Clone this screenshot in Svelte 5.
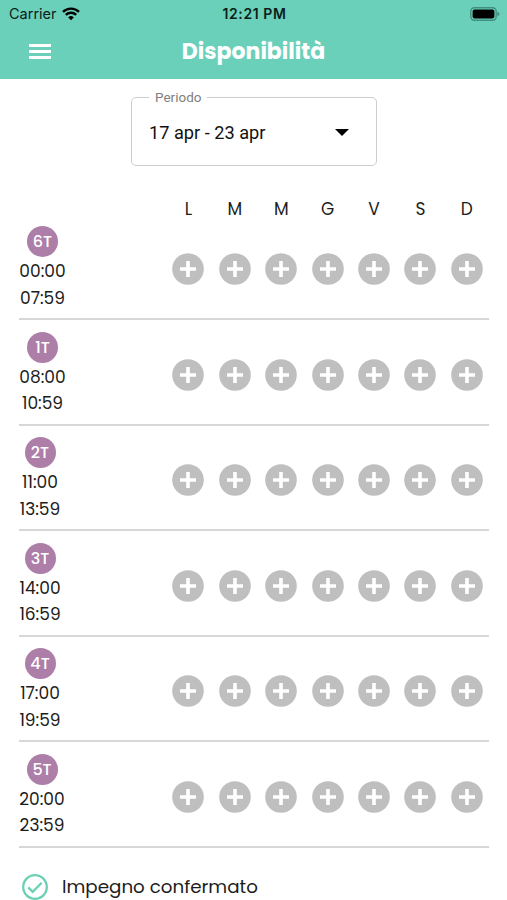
<script lang="ts">
  interface Shift {
    name: string;
    from: string;
    to: string;
    width: number;
  }

  const days = ['L', 'M', 'M', 'G', 'V', 'S', 'D'];

  const shifts: Shift[] = [
    { name: '6T', from: '00:00', to: '07:59', width: 45 },
    { name: '1T', from: '08:00', to: '10:59', width: 45 },
    { name: '2T', from: '11:00', to: '13:59', width: 40 },
    { name: '3T', from: '14:00', to: '16:59', width: 40 },
    { name: '4T', from: '17:00', to: '19:59', width: 40 },
    { name: '5T', from: '20:00', to: '23:59', width: 44 },
  ];
</script>

<div class="screen">
  <header>
    <div class="status">
      <div class="carrier">
        <span>Carrier</span>
        <svg width="18" height="14" viewBox="0 0 18 14">
          <path d="M1 4.9a11.5 11.5 0 0 1 16 0" />
          <path d="M3.8 7.8a7.5 7.5 0 0 1 10.4 0" />
          <path class="dot" d="M9 13.2 6.2 10.4a4 4 0 0 1 5.6 0z" />
        </svg>
      </div>
      <span class="clock">12:21 PM</span>
      <svg class="battery" width="30" height="14" viewBox="0 0 30 14">
        <rect class="case" x=".8" y=".8" width="25.4" height="12.4" rx="3.6" />
        <rect x="2.6" y="2.6" width="21.8" height="8.8" rx="1.8" />
        <path class="tip" d="M27.4 4.7c2.8 1 2.8 3.6 0 4.6z" />
      </svg>
    </div>
    <div class="bar">
      <button class="menu" aria-label="Menu">
        <i></i>
        <i></i>
        <i></i>
      </button>
      <h1>Disponibilità</h1>
    </div>
  </header>

  <main>
    <fieldset class="period">
      <legend>Periodo</legend>
      <span>17 apr - 23 apr</span>
      <svg width="14" height="7" viewBox="0 0 14 7"><path d="M0 0h14L7 7z" /></svg>
    </fieldset>

    <div class="days head">
      {#each days as day}
        <span>{day}</span>
      {/each}
    </div>

    {#each shifts as shift}
      <div class="row">
        <div class="shift" style:width="{shift.width}px">
          <span class="badge">{shift.name}</span>
          <span>{shift.from}</span>
          <span>{shift.to}</span>
        </div>
        <div class="days">
          {#each days as day}
            <button class="add" aria-label="Aggiungi {day}">
              <svg width="32" height="32" viewBox="0 0 32 32">
                <circle cx="16" cy="16" r="15.8" />
                <path d="M16 8v16M8 16h16" />
              </svg>
            </button>
          {/each}
        </div>
      </div>
    {/each}

    <div class="legend">
      <svg width="26" height="26" viewBox="0 0 26 26">
        <circle cx="13" cy="13" r="11.8" />
        <path d="m6.2 13.4 4.5 4.4 9-9.1" />
      </svg>
      <span>Impegno confermato</span>
    </div>
  </main>
</div>

<style>
  :global(body) {
    margin: 0;
    background: #fff;
  }
  .screen {
    height: 900px;
    overflow: hidden;
    color: #1c1c1c;
    font-family: Poppins, Inter, sans-serif;
  }
  button {
    display: block;
    padding: 0;
    border: 0;
    background: none;
  }
  svg {
    display: block;
  }
  header {
    height: 79px;
    background: #6bd0ba;
  }
  .status {
    display: grid;
    grid-template-columns: 1fr auto 1fr;
    align-items: center;
    height: 27px;
    padding: 0 7px 0 9px;
    color: #0b1d19;
    font: 14.5px/27px Inter, sans-serif;
  }
  .carrier {
    display: flex;
    align-items: center;
    gap: 5px;
  }
  .carrier svg {
    fill: none;
    stroke: #000;
    stroke-width: 2.4;
  }
  .carrier .dot {
    fill: #000;
    stroke: none;
  }
  .clock {
    font-size: 14px;
    font-weight: 600;
    letter-spacing: 0.6px;
  }
  .battery {
    justify-self: end;
  }
  .battery .case {
    fill: none;
    stroke: #41907f;
    stroke-width: 1.4;
  }
  .battery .tip {
    fill: #41907f;
  }
  .bar {
    display: grid;
    grid-template-columns: 1fr auto 1fr;
    align-items: center;
    height: 50px;
    padding: 0 29px;
  }
  .menu {
    margin-bottom: 2px;
  }
  .menu i {
    display: block;
    width: 22px;
    height: 3px;
    margin-bottom: 3px;
    background: #fff;
  }
  .menu i:last-child {
    margin-bottom: 0;
  }
  h1 {
    margin: 0;
    color: #fff;
    font-size: 22px;
    font-weight: 700;
    line-height: 50px;
  }
  main {
    padding: 0 18px 0 19px;
  }
  .period {
    display: flex;
    justify-content: space-between;
    align-items: center;
    box-sizing: border-box;
    width: 246px;
    height: 77px;
    margin: 10px auto 0 112px;
    padding: 0 27px 5px 17px;
    border: 1.5px solid #cdcdcd;
    border-radius: 5px;
    color: #111;
    font: 18.2px/54px Roboto, sans-serif;
  }
  .period legend {
    padding: 0 6px;
    color: #808080;
    font-size: 13.5px;
    line-height: 16px;
  }
  .days {
    display: grid;
    grid-template-columns: repeat(7, 46.4px);
    justify-content: end;
    align-content: start;
    justify-items: center;
    margin-right: -1px;
  }
  .head {
    margin-top: 29px;
    font-size: 17px;
    line-height: 28px;
  }
  .row {
    display: flex;
    justify-content: space-between;
    box-sizing: border-box;
    height: 105.5px;
    padding-left: 1px;
    border-bottom: 2px solid #d7d7d7;
  }
  .head + .row {
    margin-top: -8.5px;
  }
  .shift {
    display: flex;
    flex-direction: column;
    align-items: center;
    padding-top: 11.5px;
    font-size: 17px;
    line-height: 26.5px;
    white-space: nowrap;
  }
  .badge {
    width: 31px;
    height: 31px;
    margin-bottom: 1px;
    border-radius: 50%;
    background: #ad7ea8;
    color: #fff;
    font-size: 16px;
    font-weight: 500;
    line-height: 31px;
    text-align: center;
  }
  .row .days {
    padding-top: 38.5px;
  }
  .add circle {
    fill: #bfbfbf;
  }
  .add path {
    stroke: #fff;
    stroke-width: 3.6;
  }
  .legend {
    display: flex;
    align-items: center;
    gap: 14px;
    margin-top: 25.5px;
    padding-left: 3px;
    font-size: 18.3px;
  }
  .legend svg {
    fill: none;
    stroke: #6bd0b4;
    stroke-width: 2.3;
  }
</style>
